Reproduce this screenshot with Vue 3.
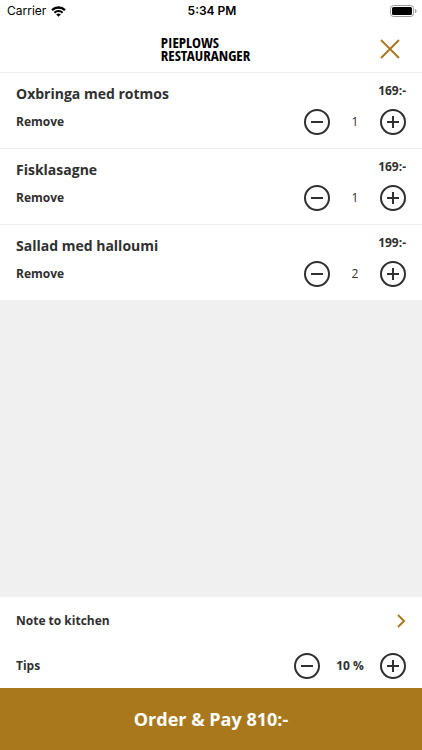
<script setup>
import { computed, ref } from 'vue'

const items = ref([
  { id: 1, name: 'Oxbringa med rotmos', price: 169, count: 1 },
  { id: 2, name: 'Fisklasagne', price: 169, count: 1 },
  { id: 3, name: 'Sallad med halloumi', price: 199, count: 2 },
])
const tip = ref(10)

const total = computed(() => {
  const sum = items.value.reduce((acc, item) => acc + item.price * item.count, 0)
  return Math.ceil((sum * (1 + tip.value / 100)) / 10) * 10
})

function remove(id) {
  items.value = items.value.filter((item) => item.id !== id)
}
</script>

<template>
  <div class="screen">
    <div class="status">
      <div class="carrier">
        <span>Carrier</span>
        <svg width="15" height="11" viewBox="0 0 15 11" aria-hidden="true">
          <path d="M1 4.1a9.4 9.4 0 0 1 13 0" fill="none" stroke="#000" stroke-width="2.300" />
          <path d="M3.400 6.700a5.900 5.900 0 0 1 8.200 0" fill="none" stroke="#000" stroke-width="2" />
          <path d="M7.500 10.800L5.200 8.500a3.300 3.300 0 0 1 4.600 0z" fill="#000" />
        </svg>
      </div>
      <span class="clock">5:34 PM</span>
      <div class="battery">
        <svg width="27" height="12" viewBox="0 0 27 12" aria-hidden="true">
          <rect x="0.5" y="0.5" width="23" height="11" rx="3" fill="#fff" stroke="#999" />
          <rect x="2" y="2" width="20" height="8" rx="1.5" fill="#000" />
          <path d="M25 4v4c1-.3 1.500-1.100 1.500-2S26 4.300 25 4z" fill="#999" />
        </svg>
      </div>
    </div>

    <header class="header">
      <h1 class="logo">
        <span>PIEPLOWS</span>
        <span>RESTAURANGER</span>
      </h1>
      <button class="close" type="button" aria-label="Close">
        <svg width="20" height="20" viewBox="0 0 20 20">
          <path d="M1 1l18 18M19 1l-18 18" stroke="#a9781d" stroke-width="1.900" />
        </svg>
      </button>
    </header>

    <main class="list">
      <section v-for="item in items" :key="item.id" class="item">
        <div class="line">
          <h2 class="name">{{ item.name }}</h2>
          <span class="price">{{ item.price }}:-</span>
        </div>
        <div class="line">
          <button class="remove" type="button" @click="remove(item.id)">Remove</button>
          <div class="stepper">
            <button class="round" type="button" aria-label="Decrease" @click="item.count = Math.max(1, item.count - 1)">
              <svg width="26" height="26" viewBox="0 0 26 26">
                <circle cx="13" cy="13" r="12" /><path d="M7 13h12" />
              </svg>
            </button>
            <span class="count">{{ item.count }}</span>
            <button class="round" type="button" aria-label="Increase" @click="item.count++">
              <svg width="26" height="26" viewBox="0 0 26 26">
                <circle cx="13" cy="13" r="12" /><path d="M7 13h12M13 7v12" />
              </svg>
            </button>
          </div>
        </div>
      </section>
    </main>

    <footer class="footer">
      <button class="note" type="button">
        <span>Note to kitchen</span>
        <svg width="10" height="14" viewBox="0 0 10 14" aria-hidden="true">
          <path d="M2 1l6 6-6 6" fill="none" stroke="#a9781d" stroke-width="2" />
        </svg>
      </button>
      <div class="tips">
        <span>Tips</span>
        <div class="stepper">
          <button class="round" type="button" aria-label="Decrease tip" @click="tip = Math.max(0, tip - 5)">
            <svg width="26" height="26" viewBox="0 0 26 26">
              <circle cx="13" cy="13" r="12" /><path d="M7 13h12" />
            </svg>
          </button>
          <span class="percent">{{ tip }} %</span>
          <button class="round" type="button" aria-label="Increase tip" @click="tip += 5">
            <svg width="26" height="26" viewBox="0 0 26 26">
              <circle cx="13" cy="13" r="12" /><path d="M7 13h12M13 7v12" />
            </svg>
          </button>
        </div>
      </div>
      <button class="pay" type="button">Order &amp; Pay {{ total }}:-</button>
    </footer>
  </div>
</template>

<style>
body {
  margin: 0;
  background: #f0f0f0;
}
</style>

<style scoped>
.screen {
  display: flex;
  flex-direction: column;
  min-height: 100vh;
  color: #303030;
  font: 700 12px/20px "Open Sans", sans-serif;
}
button {
  padding: 0;
  border: 0;
  background: none;
  color: inherit;
  font: inherit;
  cursor: pointer;
}
svg {
  display: block;
}
.status {
  display: grid;
  grid-template-columns: 1fr auto 1fr;
  align-items: center;
  height: 22px;
  padding: 0 5px 0 7px;
  background: #fff;
  color: #000;
  font: 400 12px/22px Inter, sans-serif;
}
.carrier {
  display: flex;
  align-items: center;
  gap: 5px;
}
.clock {
  font-weight: 600;
}
.battery {
  justify-self: end;
}
.header {
  display: grid;
  grid-template-columns: 1fr auto 1fr;
  align-items: center;
  height: 50px;
  padding: 3px 22px 0 11px;
  box-sizing: border-box;
  background: #fff;
}
.logo {
  display: grid;
  grid-column: 2;
  margin: 0;
  color: #000;
  font: 700 15px/13px "Open Sans Condensed", "Noto Sans Condensed", "Roboto Condensed", sans-serif;
}
.close {
  justify-self: end;
}
.item {
  box-sizing: border-box;
  height: 76px;
  padding: 8px 16px 0;
  border-top: 1px solid #efefef;
  background: #fff;
}
.line {
  display: flex;
  align-items: center;
  justify-content: space-between;
}
.name {
  margin: 0 0 2px;
  font-size: 14px;
  line-height: 26px;
}
.price {
  align-self: flex-start;
}
.stepper {
  display: flex;
  align-items: center;
}
.round svg {
  fill: none;
  stroke: #303030;
  stroke-width: 2;
}
.count {
  width: 50px;
  font-weight: 400;
  text-align: center;
}
.percent {
  width: 60px;
  text-align: center;
}
.footer {
  margin-top: auto;
  background: #fff;
}
.note {
  display: flex;
  align-items: center;
  justify-content: space-between;
  width: 100%;
  height: 47px;
  padding: 0 16px;
}
.tips {
  display: flex;
  align-items: center;
  justify-content: space-between;
  height: 44px;
  padding: 0 16px;
}
.pay {
  width: 100%;
  height: 62px;
  background: #a9781d;
  color: #fff;
  font-size: 18px;
}
</style>
